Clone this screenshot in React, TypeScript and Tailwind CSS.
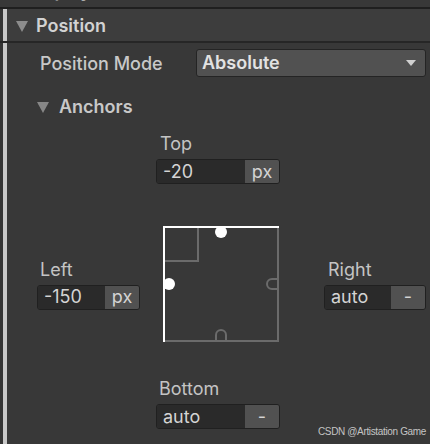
import React from "react";

function Bar() {
  return (
    <div className="flex shrink-0">
      <div className="w-[3px] bg-[#343434]" />
      <div className="w-[4px] bg-[#c8c8c8]" />
    </div>
  );
}

function Tri({ color = "#8c8c8c" }: { color?: string }) {
  return (
    <svg width="12" height="11" viewBox="0 0 12 11" className="shrink-0">
      <path d="M0 0 H12 L6 11 Z" fill={color} />
    </svg>
  );
}

function Field({ value, unit, w }: { value: string; unit: string; w: string }) {
  return (
    <div className={`flex h-[25px] ${w} overflow-hidden rounded-[3px] border border-[#202020]`}>
      <div className="flex flex-1 items-center bg-[#2a2a2a] pl-[6px] text-[18px] leading-[22px] text-[#d4d4d4]">
        {value}
      </div>
      <div className="flex w-[34px] items-center justify-center bg-[#515151] text-[18px] leading-[22px] text-[#d4d4d4]">
        {unit}
      </div>
    </div>
  );
}

function Label({ text, ml }: { text: string; ml: string }) {
  return <span className={`${ml} text-[18px] leading-[22px] text-[#c4c4c4]`}>{text}</span>;
}

export default function App() {
  return (
    <div className="relative h-[444px] w-[430px] overflow-hidden bg-[#383838] font-['Inter',sans-serif]">
      <div className="relative h-[7px] overflow-hidden">
        <span className="absolute left-[27px] top-[-20px] text-[18px] font-semibold leading-[22px] text-[#c4c4c4]">
          Display
        </span>
      </div>
      <div className="h-[2px] bg-[#1f1f1f]" />
      <div className="flex h-[32px]">
        <Bar />
        <div className="flex flex-1 items-center bg-[#3d3d3d] pt-[2px]">
          <div className="ml-[9px]">
            <Tri />
          </div>
          <span className="ml-[8px] text-[18px] font-semibold leading-[22px] text-[#d2d2d2]">Position</span>
        </div>
      </div>
      <div className="h-[2px] bg-[#262626]" />
      <div className="flex h-[401px]">
        <Bar />
        <div className="flex-1 pr-[4px]">
          <div className="mt-[6px] flex h-[28px] items-center pl-[33px]">
            <span className="w-[156px] shrink-0 pt-[1px] text-[18px] font-medium leading-[22px] text-[#c8c8c8]">
              Position Mode
            </span>
            <div className="flex h-[28px] flex-1 items-center justify-between rounded-[3px] border border-[#242424] bg-[#515151] pl-[5px] pr-[9px]">
              <span className="text-[18px] font-semibold leading-[22px] text-[#e2e2e2]">Absolute</span>
              <svg width="10" height="6" viewBox="0 0 10 6">
                <path d="M0 0 H10 L5 6 Z" fill="#d0d0d0" />
              </svg>
            </div>
          </div>

          <div className="mt-[19px] flex h-[22px] items-center pl-[30px]">
            <Tri color="#878787" />
            <span className="ml-[10px] text-[18px] font-semibold leading-[22px] text-[#c8c8c8]">Anchors</span>
          </div>

          <div className="mt-[15px] grid grid-cols-[119px_168px_1fr] pl-[30px]">
            <div />
            <div className="flex flex-col">
              <Label text="Top" ml="ml-[4px]" />
              <div className="mt-[4px]">
                <Field value="-20" unit="px" w="w-[124px]" />
              </div>
            </div>
            <div />
          </div>

          <div className="mt-[41px] grid grid-cols-[119px_168px_1fr] items-center pl-[30px]">
            <div className="flex flex-col">
              <Label text="Left" ml="ml-[3px]" />
              <div className="mt-[4px]">
                <Field value="-150" unit="px" w="w-[103px]" />
              </div>
            </div>
            <div className="pl-[6px]">
              <svg width="118" height="118" viewBox="0 0 118 118" className="block">
                <path d="M116 1 V116 H2" fill="none" stroke="#6b6b6b" strokeWidth="2" />
                <path d="M2 36 H36 V2" fill="none" stroke="#6b6b6b" strokeWidth="2" />
                <path d="M116 54 H110 A5 5 0 0 0 110 64 H116" fill="none" stroke="#6b6b6b" strokeWidth="2" />
                <path d="M54 116 V110 A5 5 0 0 1 64 110 V116" fill="none" stroke="#6b6b6b" strokeWidth="2" />
                <path d="M2 117 V2 H117" fill="none" stroke="#ffffff" strokeWidth="2" />
                <circle cx="59" cy="7" r="6" fill="#ffffff" />
                <circle cx="7" cy="59" r="6" fill="#ffffff" />
              </svg>
            </div>
            <div className="flex flex-col">
              <Label text="Right" ml="ml-[4px]" />
              <div className="mt-[4px]">
                <Field value="auto" unit="-" w="w-[102px]" />
              </div>
            </div>
          </div>

          <div className="mt-[35px] grid grid-cols-[119px_168px_1fr] pl-[30px]">
            <div />
            <div className="flex flex-col">
              <Label text="Bottom" ml="ml-[3px]" />
              <div className="mt-[4px]">
                <Field value="auto" unit="-" w="w-[124px]" />
              </div>
            </div>
            <div />
          </div>
        </div>
      </div>
      <span className="absolute bottom-[6px] right-[4px] font-['Liberation_Sans',sans-serif] text-[10px] leading-[12px] tracking-[-0.35px] text-[#c4c4c4]">
        CSDN @Artistation Game
      </span>
    </div>
  );
}
